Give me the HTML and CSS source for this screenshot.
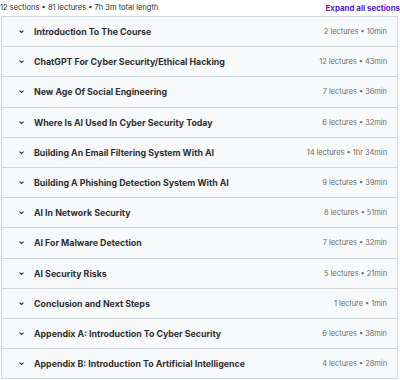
FILE: index.html
```html
<!DOCTYPE html>
<html lang="en">
<head>
    <meta charset="UTF-8">
    <title>Course content</title>
    <link rel="stylesheet" href="styles.css">
</head>
<body>
    <div class="curriculum">
        <!-- Summary line -->
        <div class="curriculum-head">
            <span class="summary">12 sections • 81 lectures • 7h 3m total length</span>
            <a href="#expand" class="expand-all">Expand all sections</a>
        </div>

        <!-- Sections -->
        <div class="sections">
            <div class="section">
                <span class="chevron"><svg viewBox="0 0 10 10"><path d="M2.8 4 L5 6 L7.2 4"/></svg></span>
                <span class="title">Introduction To The Course</span>
                <span class="meta">2 lectures • 10min</span>
            </div>
            <div class="section">
                <span class="chevron"><svg viewBox="0 0 10 10"><path d="M2.8 4 L5 6 L7.2 4"/></svg></span>
                <span class="title">ChatGPT For Cyber Security/Ethical Hacking</span>
                <span class="meta">12 lectures • 43min</span>
            </div>
            <div class="section">
                <span class="chevron"><svg viewBox="0 0 10 10"><path d="M2.8 4 L5 6 L7.2 4"/></svg></span>
                <span class="title">New Age Of Social Engineering</span>
                <span class="meta">7 lectures • 36min</span>
            </div>
            <div class="section">
                <span class="chevron"><svg viewBox="0 0 10 10"><path d="M2.8 4 L5 6 L7.2 4"/></svg></span>
                <span class="title">Where Is AI Used In Cyber Security Today</span>
                <span class="meta">6 lectures • 32min</span>
            </div>
            <div class="section">
                <span class="chevron"><svg viewBox="0 0 10 10"><path d="M2.8 4 L5 6 L7.2 4"/></svg></span>
                <span class="title">Building An Email Filtering System With AI</span>
                <span class="meta">14 lectures • 1hr 34min</span>
            </div>
            <div class="section">
                <span class="chevron"><svg viewBox="0 0 10 10"><path d="M2.8 4 L5 6 L7.2 4"/></svg></span>
                <span class="title">Building A Phishing Detection System With AI</span>
                <span class="meta">9 lectures • 39min</span>
            </div>
            <div class="section">
                <span class="chevron"><svg viewBox="0 0 10 10"><path d="M2.8 4 L5 6 L7.2 4"/></svg></span>
                <span class="title">AI In Network Security</span>
                <span class="meta">8 lectures • 51min</span>
            </div>
            <div class="section">
                <span class="chevron"><svg viewBox="0 0 10 10"><path d="M2.8 4 L5 6 L7.2 4"/></svg></span>
                <span class="title">AI For Malware Detection</span>
                <span class="meta">7 lectures • 32min</span>
            </div>
            <div class="section">
                <span class="chevron"><svg viewBox="0 0 10 10"><path d="M2.8 4 L5 6 L7.2 4"/></svg></span>
                <span class="title">AI Security Risks</span>
                <span class="meta">5 lectures • 21min</span>
            </div>
            <div class="section">
                <span class="chevron"><svg viewBox="0 0 10 10"><path d="M2.8 4 L5 6 L7.2 4"/></svg></span>
                <span class="title">Conclusion and Next Steps</span>
                <span class="meta">1 lecture • 1min</span>
            </div>
            <div class="section">
                <span class="chevron"><svg viewBox="0 0 10 10"><path d="M2.8 4 L5 6 L7.2 4"/></svg></span>
                <span class="title">Appendix A: Introduction To Cyber Security</span>
                <span class="meta">6 lectures • 38min</span>
            </div>
            <div class="section">
                <span class="chevron"><svg viewBox="0 0 10 10"><path d="M2.8 4 L5 6 L7.2 4"/></svg></span>
                <span class="title">Appendix B: Introduction To Artificial Intelligence</span>
                <span class="meta">4 lectures • 28min</span>
            </div>
        </div>
    </div>
</body>
</html>
```

FILE: styles.css
```css
/* Reset */
* {
    margin: 0;
    padding: 0;
    box-sizing: border-box;
}

body {
    font-family: 'Inter', 'Liberation Sans', sans-serif;
    background-color: #ffffff;
    color: #2d2f31;
}

.curriculum {
    width: 400px;
    padding: 0 2px 0 1px;
}

/* Summary line */
.curriculum-head {
    display: flex;
    justify-content: space-between;
    align-items: center;
    height: 16px;
    padding-bottom: 1px;
}

.summary {
    font-size: 7.5px;
    color: #2d2f31;
    margin-left: -1px;
}

.expand-all {
    font-size: 7.9px;
    font-weight: 700;
    color: #5624d0;
    text-decoration: none;
    margin-right: -2px;
}

/* Section list */
.sections {
    border: 1px solid #d1d7dc;
    border-bottom: none;
}

.section {
    display: flex;
    align-items: center;
    height: 30.2px;
    padding: 0 10px 0 15px;
    background-color: #f7f9fa;
    border-bottom: 1px solid #d1d7dc;
}

.chevron {
    width: 9px;
    height: 9px;
    display: flex;
    margin-right: 8px;
}

.chevron svg {
    width: 9px;
    height: 9px;
    fill: none;
    stroke: #2d2f31;
    stroke-width: 1.2;
}

.title {
    flex: 1;
    font-size: 8.8px;
    font-weight: 700;
    white-space: nowrap;
}

.meta {
    font-size: 7.4px;
    color: #6a6f73;
    white-space: nowrap;
}
```
